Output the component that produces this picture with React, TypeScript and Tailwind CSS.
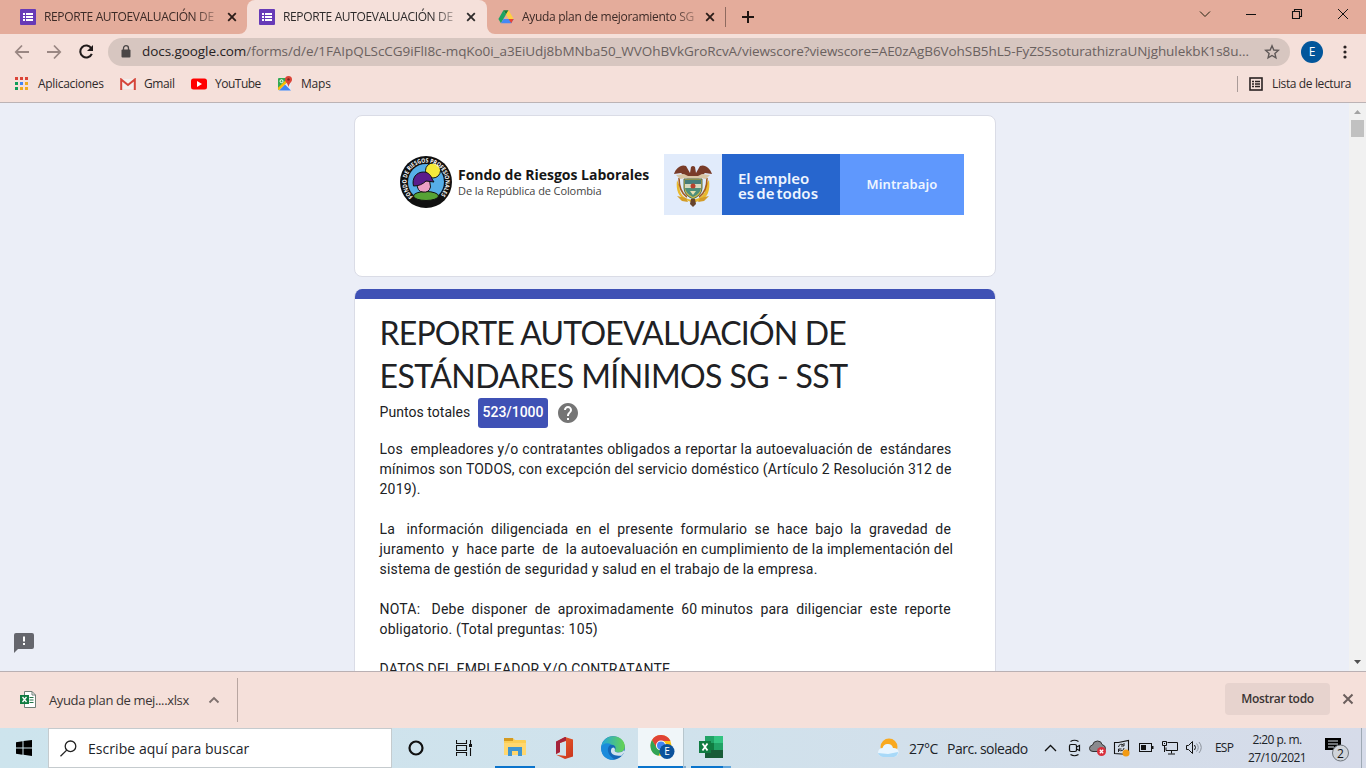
import React from 'react';

function FormsIcon() {
  return (
    <svg width="16" height="16" viewBox="0 0 16 16" className="shrink-0">
      <rect width="16" height="16" rx="1" fill="#673ab7" />
      <path d="M3 4h2v2H3zM6 4h7v2H6zM3 7h2v2H3zM6 7h7v2H6zM3 10h2v2H3zM6 10h7v2H6z" fill="#fff" />
    </svg>
  );
}

function Cross({ className = '' }: { className?: string }) {
  return (
    <svg width="10" height="10" viewBox="0 0 10 10" className={'shrink-0 ' + className}>
      <path d="M1.2 1.2l7.6 7.6M8.8 1.2L1.2 8.8" stroke="currentColor" strokeWidth="1.8" />
    </svg>
  );
}

function TabBar() {
  return (
    <div className="flex h-[34px] bg-[#e4ac9b] text-[12px] text-[#3c2a26]">
      <div className="flex w-[247px] items-center pl-5">
        <FormsIcon />
        <div className="ml-2 w-[172px] overflow-hidden whitespace-nowrap tracking-[-0.35px] [mask-image:linear-gradient(to_right,black_150px,transparent_180px)]">
          REPORTE AUTOEVALUACIÓN DE E
        </div>
        <Cross className="ml-[11px] text-[#2a1c18]" />
      </div>
      <div className="relative flex w-[240px] items-center rounded-t-lg bg-[#f5e0da] pl-3 text-[#2d2a2a]">
        <svg className="absolute -left-2 bottom-0" width="8" height="8"><path d="M8 0v8H0A8 8 0 0 0 8 0z" fill="#f5e0da" /></svg>
        <svg className="absolute -right-2 bottom-0" width="8" height="8"><path d="M0 0v8H8A8 8 0 0 1 0 0z" fill="#f5e0da" /></svg>
        <FormsIcon />
        <div className="ml-2 w-[172px] overflow-hidden whitespace-nowrap tracking-[-0.35px] [mask-image:linear-gradient(to_right,black_150px,transparent_180px)]">
          REPORTE AUTOEVALUACIÓN DE E
        </div>
        <Cross className="ml-[11px]" />
      </div>
      <div className="flex w-[238px] items-center pl-[11px]">
        <svg width="16" height="16" viewBox="0 0 16 16" className="shrink-0">
          <path d="M5.4 1.2h5.2L8 5.7z" fill="#188038" />
          <path d="M5.4 1.2L0.4 9.9l2.5 4.3L8 5.6z" fill="#1ea362" />
          <path d="M10.6 1.2L8 5.6l2.6 4.4h5.1z" fill="#ffcf42" />
          <path d="M5.5 9.9h10.2l-2.5 4.4H2.9z" fill="#4688f4" />
          <path d="M13.2 14.3l2.5-4.4h-5.1z" fill="#ea4335" />
        </svg>
        <div className="ml-2 w-[172px] overflow-hidden whitespace-nowrap tracking-[-0.3px] [mask-image:linear-gradient(to_right,black_150px,transparent_184px)]">
          Ayuda plan de mejoramiento SG-S
        </div>
        <Cross className="ml-[11px] text-[#2a1c18]" />
      </div>
      <div className="mt-[7px] h-5 w-px bg-[#8e6a5f]" />
      <svg width="12" height="12" className="mt-[11px] ml-4"><path d="M6 0v12M0 6h12" stroke="#1f1512" strokeWidth="2" /></svg>
      <div className="ml-auto flex pt-2 text-black">
        <svg width="46" height="12" fill="none" stroke="#221"><path d="M19 3.5l5 5 5-5" /></svg>
        <svg width="46" height="12" stroke="#111"><path d="M19 6.5h10" /></svg>
        <svg width="46" height="12" fill="none" stroke="#111" strokeWidth="1.1"><path d="M19.5 3.5h7v7h-7zM21.5 3.5v-2h7v7h-2" /></svg>
        <svg width="47" height="12" stroke="#111"><path d="M19 1l10 10M29 1L19 11" /></svg>
      </div>
    </div>
  );
}

function Toolbar() {
  return (
    <div className="flex h-[35px] items-center bg-[#f5e0da]">
      <svg width="108" height="28" viewBox="0 0 108 28" fill="none" strokeWidth="1.8" className="shrink-0">
        <path d="M29 14H16.5M22 7.5L15.8 14l6.2 6.5" stroke="#9a8783" />
        <path d="M47 14h12.5M54 7.5l6.2 6.5-6.2 6.5" stroke="#9a8783" />
        <path d="M91.3 10.2A6 6 0 1 0 91.8 15.8" stroke="#201a1a" strokeWidth="2.1" />
        <path d="M93 7v6h-6z" fill="#201a1a" />
      </svg>
      <div className="flex h-7 w-[1182px] shrink-0 items-center rounded-full bg-[#d7c6c0] pl-[13px]">
        <svg width="10" height="13" viewBox="0 0 10 13" fill="none">
          <rect x="0.5" y="4.5" width="9" height="8" rx="1" fill="#4a4646" />
          <path d="M2.5 5V3.2a2.500 2.500 0 0 1 5 0V5" stroke="#4a4646" strokeWidth="1.3" />
        </svg>
        <div className="ml-[11px] w-[1112px] whitespace-nowrap text-[13.5px] tracking-[-0.07px] text-[#6a615f]">
          <span className="text-[#262223]">docs.google.com</span>/forms/d/e/1FAIpQLScCG9iFlI8c-mqKo0i_a3EiUdj8bMNba50_WVOhBVkGroRcvA/viewscore?viewscore=AE0zAgB6VohSB5hL5-FyZS5soturathizraUNjghulekbK1s8u...
        </div>
        <svg width="16" height="16" viewBox="0 0 16 16" className="ml-[10px]" fill="none">
          <path d="M8 1.8l1.8 4.2 4.5.4-3.400 3 1 4.400L8 11.500l-3.900 2.300 1-4.400-3.400-3 4.500-.4z" stroke="#5f5857" strokeWidth="1.4" />
        </svg>
      </div>
      <div className="ml-[11px] flex size-[22px] items-center justify-center rounded-full bg-[#02569b] text-[12px] leading-none text-white">E</div>
      <svg width="4" height="14" className="ml-[20px]"><g fill="#2a2222"><circle cx="2" cy="2" r="1.6" /><circle cx="2" cy="7" r="1.6" /><circle cx="2" cy="12" r="1.6" /></g></svg>
    </div>
  );
}

function Bookmarks() {
  return (
    <div className="flex h-[34px] items-center border-b border-[#bcb3b5] bg-[#f5e0da] pb-[4px] pl-[15px] text-[12px] text-[#2f2a2a]">
      <svg width="13" height="13">
        <path d="M0 0h3v3H0zM5 0h3v3H5zM10 0h3v3h-3z" fill="#db4437" />
        <path d="M0 5h3v3H0zM0 10h3v3H0z" fill="#0f9d58" /><path d="M5 5h3v3H5z" fill="#4285f4" /><path d="M10 5h3v3h-3zM5 10h3v3H5zM10 10h3v3h-3z" fill="#efab1e" />
      </svg>
      <span className="ml-[10px] w-[82px] tracking-[-0.3px]">Aplicaciones</span>
      <svg width="16" height="12" viewBox="0 0 16 12"><path d="M2 1h12v10H2z" fill="#f3eeec" /><path d="M1.2 12V1.5L8 7l6.800-5.500V12" fill="none" stroke="#d5453a" strokeWidth="2" /></svg>
      <span className="ml-2 w-[47px] tracking-[-0.4px]">Gmail</span>
      <svg width="16" height="12"><rect y=".5" width="16" height="11" rx="2.5" fill="#f00" /><path d="M6 3l5 3-5 3z" fill="#fff" /></svg>
      <span className="ml-2 w-[62px] tracking-[-0.5px]">YouTube</span>
      <svg width="16" height="16" viewBox="0 0 16 16">
        <path d="M1 2h13v12.500H1z" fill="#e8eaed" /><path d="M1 3q0-1 1-1h8v4L1 14z" fill="#34a853" /><path d="M2 14.500l6-6 6 6z" fill="#4285f4" /><path d="M0.800 12l8-8 1.500 2-8.500 8.500z" fill="#fbbc04" /><circle cx="4.5" cy="5.2" r="1.5" fill="none" stroke="#fff" />
        <path d="M11.500 0a3.500 3.500 0 0 1 3.500 3.500c0 2.500-2.800 3.500-3.500 7.500C10.800 7 8 6 8 3.500A3.500 3.500 0 0 1 11.500 0z" fill="#db4437" /><circle cx="11.5" cy="3.4" r="1.2" fill="#7b231b" />
      </svg>
      <span className="ml-2 tracking-[-0.2px]">Maps</span>
      <div className="ml-auto h-4 w-px bg-[#a99b98]" />
      <svg width="14" height="14" className="ml-[11px]" fill="none" stroke="#2a2222"><rect x="1" y="1" width="12" height="12" strokeWidth="1.6" /><path d="M3 4.500h2M6 4.500h5M3 7h2M6 7h5M3 9.500h2M6 9.500h5" strokeWidth="1.4" /></svg>
      <span className="ml-[9px] w-[94px] whitespace-nowrap tracking-[-0.37px]">Lista de lectura</span>
    </div>
  );
}

function FondoLogo() {
  return (
    <svg width="54" height="54" viewBox="0 0 54 54">
      <defs><path id="ring" d="M14 41.500A19.500 19.500 0 1 1 40 41.500" /></defs>
      <circle cx="27" cy="27" r="26" fill="#101010" />
      <circle cx="27" cy="27" r="18" fill="#56aee8" />
      <circle cx="34" cy="15.5" r="7.5" fill="#f4e93a" stroke="#111" strokeWidth="1" />
      <path d="M13 43Q18 38 27 38t14 5q-6 6-14 6t-14-6z" fill="#111" />
      <ellipse cx="27" cy="41" rx="12.5" ry="4.5" fill="#57a336" stroke="#111" />
      <path d="M18 28q0 9 6 9 6 1 7.500-5l-1-7z" fill="#eca0c4" stroke="#111" />
      <path d="M14.500 31c-2-8 3-14 10-14 5 0 8 4 8.500 7l2 3-8-1q-5 5-12.500 5z" fill="#5b1c8c" stroke="#111" />
      <text fill="#fff" className="font-['Open_Sans',sans-serif] text-[6px] font-bold"><textPath href="#ring" textLength="91" lengthAdjust="spacingAndGlyphs">FONDO DE RIESGOS PROFESIONALES</textPath></text>
    </svg>
  );
}

function Crest() {
  return (
    <svg width="40" height="44" viewBox="0 0 40 44">
      <path d="M4 17q-2 16 9 20l5 2h5l5-2q10-4 8-20-4 5-4 12-4 6-9 7l-4 1-4-1q-6-2-8-8 0-6-3-11z" fill="#e9b92f" />
      <path d="M6 15q0 14 8 19M34 15q0 14-8 19" stroke="#a55b21" strokeWidth="1.6" fill="none" />
      <path d="M1 11C3 5 8 1 13 3l4 7 1-6q2-2 4 0l1 6 4-7c5-2 10 2 12 8l-7-1-5 4h-14l-5-4z" fill="#793b28" />
      <path d="M3 12l8-1 4 2h10l4-2 8 1-4 4-6-1-4 3-3-2-3 2-4-3-6 1z" fill="#d8c5a4" />
      <path d="M11 16h18v9q0 7-9 11-9-4-9-11z" fill="#c9b84f" stroke="#526c4b" />
      <path d="M12 17h16v4H12z" fill="#477d7b" /><path d="M12 21h16v4H12z" fill="#d8d8be" /><path d="M12 25h16q-1 6-8 9-7-3-8-9z" fill="#4e8f7b" />
      <circle cx="20" cy="23" r="2.5" fill="#b8412e" /><path d="M17 28h6l-3 4z" fill="#e8dfb0" /><path d="M18 36h4l1 5-3 3-3-3z" fill="#68442c" /><path d="M4 33l5 5 6 1-2-4zM36 33l-5 5-6 1 2-4z" fill="#d39c29" />
    </svg>
  );
}

function J({ children }: { children: React.ReactNode }) {
  return <div className="text-justify whitespace-nowrap [text-align-last:justify]">{children}</div>;
}

function W({ children }: { children: React.ReactNode }) {
  return <span className="ml-1">{children}</span>;
}

function FormPage() {
  return (
    <div className="flex h-[568px] overflow-hidden bg-[#ebeef7]">
      <div className="flex w-[355px] shrink-0 items-end pb-[18px] pl-[14px]">
        <svg width="20" height="20"><path d="M2 0h16a2 2 0 0 1 2 2v12a2 2 0 0 1-2 2H4l-4 4V2a2 2 0 0 1 2-2z" fill="#65666d" /><path d="M9 3.500h2v5H9zM9 10h2v2H9z" fill="#fff" /></svg>
      </div>
      <div className="w-[640px] shrink-0 pt-3">
        <div className="-ml-px flex h-[162px] w-[642px] rounded-lg border border-[#dadce6] bg-white pt-[38px] pl-[44px]">
          <div className="flex h-[62px] w-[265px] pt-px">
            <div className="shrink-0"><FondoLogo /></div>
            <div className="ml-[5px] pt-[11px] whitespace-nowrap text-[#161616]">
              <div className="text-[14px] leading-[18px] font-bold tracking-[-0.02px]">Fondo de Riesgos Laborales</div>
              <div className="text-[11px] leading-[13px] tracking-[-0.1px] text-[#444]">De la República de Colombia</div>
            </div>
          </div>
          <div className="flex h-[61px] w-[300px] font-['Noto_Sans',sans-serif] text-[#eef5ff]">
            <div className="flex w-[58px] items-center justify-center bg-[#e1ebfb]"><Crest /></div>
            <div className="w-[118px] bg-[#2766ce] pt-[17px] pl-4 text-[15px] leading-[15px] font-semibold whitespace-nowrap">
              <div>El empleo</div><div className="tracking-[0.05px] [word-spacing:-2px]">es de todos</div>
            </div>
            <div className="flex flex-1 items-center justify-center bg-[#5f98fd] pt-px text-[13px] font-semibold tracking-[0.1px]">Mintrabajo</div>
          </div>
        </div>
        <div className="mt-3 -ml-px h-[500px] w-[642px] overflow-hidden rounded-t-lg border-x border-[#dadce6] bg-white font-['Roboto',sans-serif] text-[14px] text-[#202124]">
          <div className="h-[10px] bg-[#3f51b5]" />
          <div className="pt-[12px] pl-[24.5px]">
            <h1 className="font-['Lato',sans-serif] text-[32px] leading-[43px] whitespace-nowrap">
              <div className="tracking-[-0.8px]">REPORTE AUTOEVALUACIÓN DE</div>
              <div className="tracking-[-0.58px]">ESTÁNDARES MÍNIMOS SG - SST</div>
            </h1>
            <div className="mt-px flex h-[30px] items-center">
              <span className="w-[98.5px] pb-px tracking-[0.05px]">Puntos totales</span>
              <span className="flex h-[30px] w-[70px] items-center justify-center rounded-[3px] bg-[#3f51b5] pb-px font-medium tracking-[-0.05px] text-white">523/1000</span>
              <svg width="20" height="20" viewBox="2 2 20 20" className="ml-[10px]"><path fill="#757575" d="M12 2C6.480 2 2 6.480 2 12s4.480 10 10 10 10-4.480 10-10S17.520 2 12 2zm1 17h-2v-2h2v2zm2.070-7.750-.9.920C13.450 12.900 13 13.500 13 15h-2v-.5c0-1.100.45-2.100 1.170-2.830l1.240-1.260c.37-.36.59-.86.59-1.410 0-1.100-.9-2-2-2s-2 .9-2 2H8c0-2.210 1.790-4 4-4s4 1.790 4 4c0 .88-.36 1.680-.93 2.250z" /></svg>
            </div>
            <div className="mt-[11px] w-[571.5px] leading-5 tracking-[0.2px]">
              <J>Los <W>empleadores</W> y/o contratantes obligados a reportar la autoevaluación de <W>estándares</W></J>
              <J>mínimos son TODOS, con excepción del servicio doméstico (Artículo 2 Resolución 312 de</J>
              <div>2019).</div>
              <div className="mt-5"><J>La <W>información</W> diligenciada en el presente formulario se hace bajo la gravedad de</J></div>
              <J>juramento <W>y</W> <W>hace</W> parte <W>de</W> <W>la</W> autoevaluación en cumplimiento de la implementación del</J>
              <div>sistema de gestión de seguridad y salud en el trabajo de la empresa.</div>
              <div className="mt-5"><J>NOTA: <W>Debe</W> disponer de aproximadamente <span className="inline-block">60 minutos</span> para diligenciar este reporte</J></div>
              <div>obligatorio. (Total preguntas: 105)</div>
              <div className="mt-5">DATOS DEL EMPLEADOR Y/O CONTRATANTE</div>
            </div>
          </div>
        </div>
      </div>
      <div className="ml-auto flex w-[17px] flex-col items-center bg-[#f1f1f1]">
        <svg width="17" height="17"><path d="M5 11l3.500-4 3.500 4z" fill="#a3a3a3" /></svg>
        <div className="h-[17px] w-[13px] bg-[#c1c1c1]" />
        <svg width="17" height="17" className="mt-auto"><path d="M5 6l3.500 4L12 6z" fill="#505050" /></svg>
      </div>
    </div>
  );
}

function Downloads() {
  return (
    <div className="flex h-[57px] items-center border-t border-[#b9b0b3] bg-[#f5e0da] text-[#3a3535]">
      <svg width="16" height="17" viewBox="0 0 16 17" className="mb-[2px] ml-5">
        <path d="M4.500 0.500h7.500l3.500 3.500v12.500h-11z" fill="#fff" stroke="#6e7f76" /><path d="M12 .5V4h3.500" fill="none" stroke="#6e7f76" />
        <path d="M9.500 6.500h4M9.500 9h4M9.500 11.500h4" stroke="#217346" /><rect y="4" width="9" height="9" fill="#107c41" /><path d="M2.500 6l4 5M6.500 6l-4 5" stroke="#fff" strokeWidth="1.3" />
      </svg>
      <span className="ml-[13px] w-[158px] pt-px text-[13px] tracking-[-0.37px] whitespace-nowrap">Ayuda plan de mej....xlsx</span>
      <svg width="12" height="8" className="ml-px shrink-0" fill="none" stroke="#7d706d" strokeWidth="1.8"><path d="M1.500 6.500L6 2l4.500 4.500" /></svg>
      <div className="ml-[17px] h-11 w-px bg-[#b8a6a1]" />
      <div className="mb-[2px] ml-auto flex h-8 w-[105px] items-center justify-center rounded bg-[#e7d3ce] text-[12px] font-semibold tracking-[-0.3px] whitespace-nowrap text-[#3a3333]">Mostrar todo</div>
      <svg width="12" height="12" className="mr-3 mb-[2px] ml-3 shrink-0"><path d="M1.500 1.500l9 9M10.500 1.500l-9 9" stroke="#6b5f5d" strokeWidth="2" /></svg>
    </div>
  );
}

function TrayIcons() {
  return (
    <div className="flex items-center text-black">
      <svg width="24" height="18" viewBox="0 0 24 18" fill="none" stroke="#111" strokeWidth="1.3"><path d="M7 12l5.500-5.500L18 12" /></svg>
      <svg width="24" height="18" viewBox="0 0 24 18" fill="none" stroke="#111" strokeWidth="1.2"><rect x="7.5" y="5.5" width="7" height="7" rx="1.5" /><path d="M14.500 8l3-1.500v5l-3-1.500M8.500 2.500q4-2.500 8 0M8.500 15.500q4 2.500 8 0" /></svg>
      <svg width="24" height="18" viewBox="0 0 24 18"><path d="M7 12.500q-3.500 0-3.500-3t3-3.500q1-4 5-4t4.500 3.500q3.500 1 3.500 4t-3 3z" fill="#8a8a8e" stroke="#333" /><circle cx="15.500" cy="12.500" r="4.500" fill="#d92f3b" /><path d="M13.800 10.800l3.400 3.400M17.200 10.800l-3.400 3.400" stroke="#fff" strokeWidth="1.3" /></svg>
      <svg width="24" height="18" viewBox="0 0 24 18"><path d="M4.500 3.500h4l10-2v14l-14-1z" fill="none" stroke="#111" strokeWidth="1.1" /><path d="M8.500 8a3 3 0 0 1 5-2M14 4v3h-3M14 9a3 3 0 0 1-5 2M8.500 13v-3h3" fill="none" stroke="#222" /><circle cx="16" cy="14" r="3.5" fill="#f29a12" /></svg>
      <svg width="24" height="18" viewBox="0 0 24 18"><rect x="5.500" y="4.500" width="12" height="8" fill="none" stroke="#111" /><path d="M7 6h5v5H7zM18 7h1.500v3H18z" fill="#111" /></svg>
      <svg width="24" height="18" viewBox="0 0 24 18" fill="none" stroke="#111"><path d="M9.500 3.500h10v8H8V8.500M13.500 11.500v3M10 15h7" /><path d="M4.500 2.500h4v4h-4zM6.500 6.500V13M6 4.500h1" /></svg>
      <svg width="24" height="18" viewBox="0 0 24 18" fill="none" stroke="#111"><path d="M4.500 6.500h2l4-4v12l-4-4h-2zM12.500 6q2 2.500 0 5" /><path d="M14.500 4.500q3.500 4 0 8M17 3q4.500 5.500 0 11" stroke="#8b929b" /></svg>
    </div>
  );
}

function Taskbar() {
  return (
    <div className="flex h-10 bg-linear-to-r from-[#cde4ed] via-[#d0e2ec] to-[#d6dbe9] text-[#1c2328]">
      <div className="flex w-12 items-center justify-center"><svg width="16" height="16"><path d="M0 2.300l6.500-1v6.300H0zM7.500 1.100L16 0v7.600H7.500zM0 8.500h6.500v6.200l-6.500-.9zM7.500 8.500H16V16l-8.500-1.200z" fill="#000" /></svg></div>
      <div className="flex w-[344px] items-center border border-[#c5cbce] bg-white pl-[11px]">
        <svg width="17" height="17" fill="none" stroke="#222" strokeWidth="1.3"><circle cx="10.500" cy="6.300" r="5.300" /><path d="M6.700 10.100L.5 16.300" /></svg>
        <span className="ml-[11px] pt-px text-[14px] tracking-[0.05px] whitespace-nowrap">Escribe aquí para buscar</span>
      </div>
      <div className="flex w-12 items-center justify-center"><svg width="16" height="16"><circle cx="8" cy="8" r="6.500" fill="none" stroke="#111" strokeWidth="2.200" /></svg></div>
      <div className="flex w-12 items-center justify-center"><svg width="17" height="16" fill="none" stroke="#111" strokeWidth="1.100"><path d="M.5 0v3.500h10V0M.5 16v-3.500h10V16M.5 5.500h10v5H.5zM14.500 0v4M14.500 8v8" /><path d="M13 4h3v3h-3z" fill="#111" stroke="none" /></svg></div>
      <div className="ml-[7px] flex w-10 items-center justify-center border-b-2 border-[#0a74cc]">
        <svg width="22" height="20"><path d="M0 2q0-1 1-1h8l2 2h10q1 0 1 1v14H0z" fill="#fbce54" /><path d="M0 1h9v3H0z" fill="#d49a20" /><path d="M0 6h22v12H0z" fill="#ffd76e" /><path d="M4 10h14v9h-4v-5H8v5H4z" fill="#3f95d0" /></svg>
      </div>
      <div className="flex w-[57px] items-center justify-center">
        <svg width="20" height="24"><defs><linearGradient id="off" y2="1"><stop stopColor="#f0652b" /><stop offset="1" stopColor="#c8331d" /></linearGradient></defs><path d="M11 1l8 2.500v17L11 23l-9-4.200 10 1.200V5L6 7v9l-4 2V6z" fill="url(#off)" /><path d="M11 1L2 5.500V18l4-2V7l6-2.500V1.300z" fill="#a5233a" /></svg>
      </div>
      <div className="flex w-[41px] items-center justify-center">
        <svg width="24" height="24" viewBox="0 0 24 24"><defs><linearGradient id="eg" x2="1"><stop stopColor="#22a6dc" /><stop offset="1" stopColor="#67d44d" /></linearGradient></defs>
          <circle cx="12" cy="12" r="11.800" fill="#1467b7" /><path d="M.3 11C1 4.500 6 .2 12 .2c7 0 11.800 4.600 11.800 10 0 4-3 6.300-6 6.300-3.800 0-4.300-1.500-3.600-2.800 1-1.700.2-5-3.400-5C6 8.700 2 8.500.3 11z" fill="url(#eg)" /><path d="M.3 11C2 7 6.500 6.500 10.500 8.500 5.500 10 6 17 10 20.500 11.500 22 13 23 14 23.500 6 25-.7 19.500.3 11z" fill="#1b8bdb" /><path d="M14 13.800c-.8 1.400.3 2.700 3.700 2.700 2 0 4-1 5-2.300l1.300 1.500-3.500 4q-3 0-6.500-.5c-3.500-1-5-3.500-3.500-6.700q3-2.500 3.500 1.300z" fill="#d1e2ec" /></svg>
      </div>
      <div className="ml-[5px] flex w-[45px] items-center justify-center border-b-2 border-[#0a74cc] bg-[#f0f6f9]">
        <svg width="27" height="26" viewBox="0 0 27 26" className="ml-1"><circle cx="12" cy="11.500" r="10.500" fill="#fbc116" /><path d="M3 6A10.500 10.500 0 0 1 21.500 7H12l-4.500 7z" fill="#e04336" /><path d="M3 6l5 8.500 4 2-2.500 5.300C2 20.500-.5 12 3 6z" fill="#31a455" /><circle cx="12" cy="11.500" r="5" fill="#fff" /><circle cx="12" cy="11.500" r="4" fill="#4285f4" /><circle cx="18" cy="17.500" r="7.500" fill="#0b529c" /><text x="18" y="21" textAnchor="middle" fill="#fff" className="text-[10px]">E</text></svg>
      </div>
      <div className="w-[3px] border-b-2 border-l border-[#82acd0] border-l-[#b7c6cd]" />
      <div className="ml-[5px] flex w-8 items-center justify-end border-b-2 border-[#0a74cc]">
        <svg width="24" height="22"><path d="M6 0h9v7H6z" fill="#21a366" /><path d="M15 0h9v7h-9z" fill="#33c481" /><path d="M6 7h9v7H6z" fill="#107c41" /><path d="M15 7h9v7h-9z" fill="#21a366" /><path d="M6 14h18v8H6z" fill="#185c37" /><path d="M0 5h12v12H0z" fill="#107c41" /><path d="M3.500 7.500l5 7M8.500 7.500l-5 7" stroke="#fff" strokeWidth="1.800" /></svg>
      </div>
      <div className="w-2 border-b-2 border-[#63a7dc]" />
      <div className="ml-auto flex items-center">
        <svg width="22" height="20" viewBox="0 0 22 20"><circle cx="11" cy="9" r="8.500" fill="#f9a91f" /><path d="M5 19q-5-1-5-5 1-4 4.500-4Q6 5.500 10 6q4 0 5 4 4-.5 5.500 3 .5 5-4.500 6z" fill="#e7f5ff" /><path d="M5 19q-4-1-5-4l10 1 10-2q0 4-4 5z" fill="#a8d9f8" /></svg>
        <span className="ml-[9px] w-[38px] pt-px text-[14px] tracking-[-0.5px] whitespace-nowrap">27°C</span>
        <span className="w-[91px] pt-px text-[14px] tracking-[-0.5px] whitespace-nowrap">Parc. soleado</span>
        <TrayIcons />
        <span className="ml-[9px] w-[31px] text-[12px] tracking-[-0.8px]">ESP</span>
        <div className="w-[62px] pt-px text-center text-[12px] leading-[18px] tracking-[-0.55px] whitespace-nowrap"><div>2:20 p. m.</div><div>27/10/2021</div></div>
        <svg width="26" height="28" viewBox="0 0 26 28" className="mt-1 ml-[17px]"><path d="M0 2h16v12h-4v4l-4-4H0z" fill="#000" /><path d="M3 5h10M3 8h10M3 11h6" stroke="#dce3eb" /><circle cx="15.500" cy="17" r="8" fill="#d0d4da" stroke="#6f767d" /><text x="15.500" y="21.500" textAnchor="middle" fill="#111" className="text-[12px]">2</text></svg>
        <div className="ml-[10px] h-10 w-px bg-[#9ea9b4]" /><div className="w-1" />
      </div>
    </div>
  );
}

export default function App() {
  return (
    <div className="h-[768px] w-[1366px] overflow-hidden font-['Open_Sans','Noto_Sans',sans-serif]">
      <TabBar />
      <Toolbar />
      <Bookmarks />
      <FormPage />
      <Downloads />
      <Taskbar />
    </div>
  );
}
